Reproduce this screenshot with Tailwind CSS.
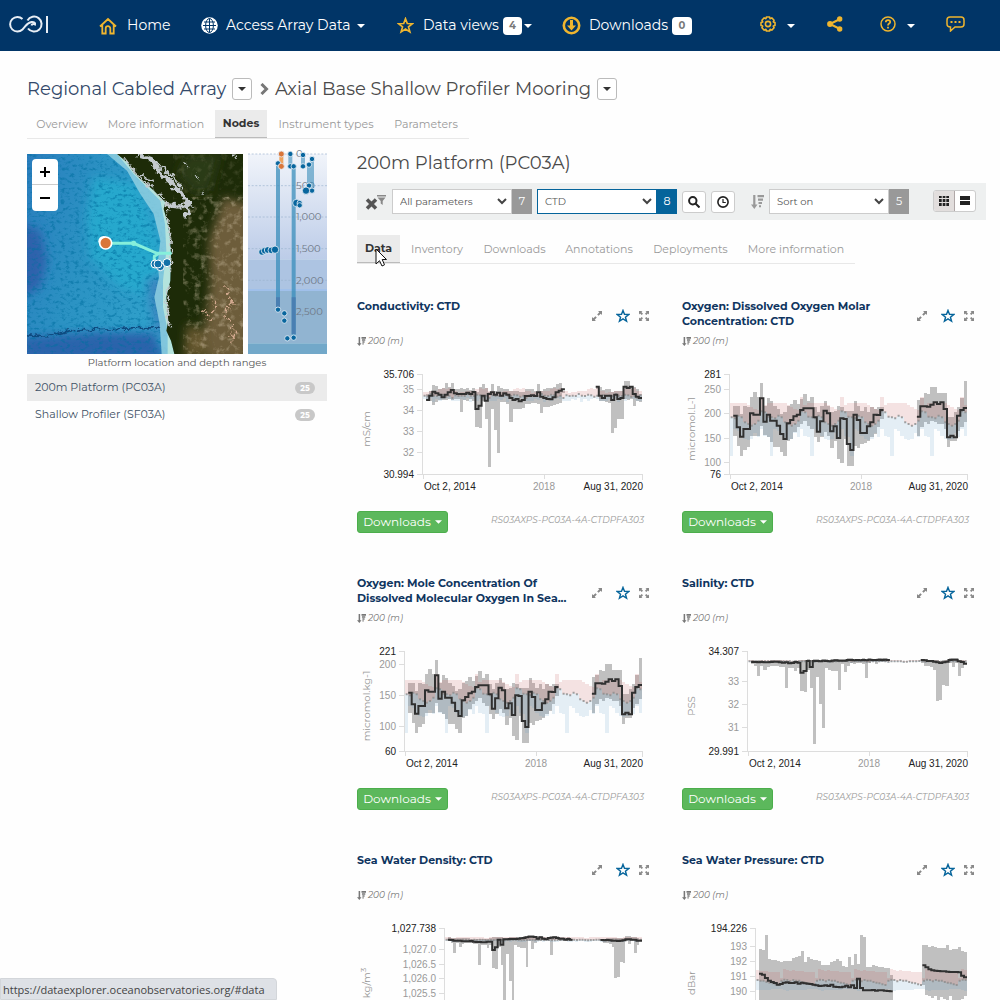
<!DOCTYPE html>
<html lang="en">
<head>
<meta charset="utf-8">
<meta name="viewport" content="width=device-width, initial-scale=1">
<title>OOI Data Explorer</title>
<script src="https://cdn.jsdelivr.net/npm/@tailwindcss/browser@4"></script>
</head>
<body class="h-screen overflow-hidden bg-[#fefefe] font-['Montserrat','Inter',sans-serif] text-[#333]">

<svg class="hidden" aria-hidden="true">
  <symbol id="caret" viewBox="0 0 8 4"><path d="M0 0h8L4 4z" fill="currentColor"/></symbol>
  <symbol id="chevron" viewBox="0 0 10 7"><path d="M1 1l4 4 4-4" fill="none" stroke="currentColor" stroke-width="2"/></symbol>
  <symbol id="star" viewBox="0 0 16 16"><path d="M8 1.600l1.700 4.500 4.900.2-3.800 3 1.300 4.700L8 11.300 3.900 14l1.300-4.700-3.800-3 4.900-.2z" fill="none" stroke="currentColor" stroke-width="1.600"/></symbol>
  <symbol id="resize" viewBox="0 0 12 12"><path d="M7 1h4v4L9.700 3.700 7.600 5.800 6.200 4.400l2.100-2.100zM5 11H1V7l1.300 1.300 2.100-2.100 1.400 1.400-2.100 2.100z" fill="currentColor"/></symbol>
  <symbol id="full" viewBox="0 0 12 12"><path d="M1 4.500V1h3.500L3.400 2.100 5 3.700 3.700 5 2.100 3.400zM7.500 1H11v3.500L9.900 3.400 8.300 5 7 3.700l1.600-1.600zM11 7.500V11H7.500l1.100-1.100L7 8.300 8.300 7l1.600 1.600zM4.500 11H1V7.500l1.100 1.100L3.700 7 5 8.300 3.400 9.900z" fill="currentColor"/></symbol>
  <symbol id="depth" viewBox="0 0 10 10"><path d="M1.800 0h1.700v7H5L2.600 10 0 7h1.800zM5 0h5v2H5zM5.500 2.500h3.700v1.700H5.500zM6 4.800h2.400v1.500H6zM6 7h1.500v1.300H6z" fill="currentColor"/></symbol>
</svg>

<header class="flex h-[51px] items-center bg-[#013567] text-[14px] text-white">
  <a href="#" aria-label="OOI" class="ml-2 w-[91px] pb-1">
    <svg class="h-5 w-[42px]" viewBox="0 0 42 20" fill="none" stroke="#e8eef5" stroke-width="2"><path d="M14.500 5A7.300 7.300 0 1 0 14.500 15.500C18 12 19 8.500 23.500 8c2.500-.3 4 1 3.500 2.500-1.500-1-3-.5-3.500 1M19.500 6.500A7.500 7.500 0 1 1 20 14.500"/><path d="M39 2v17"/></svg>
  </a>
  <nav class="flex items-center">
    <a href="#" class="flex w-[102px] items-center gap-[10px]">
      <svg class="size-[18px] text-[#efb52f]" viewBox="0 0 18 18" fill="none" stroke="currentColor" stroke-width="1.800"><path d="M1 9.500L9 2l8 7.500M3.300 8v8.500h3.400V11.500a2.300 2.300 0 0 1 4.600 0v5h3.400V8"/></svg>Home</a>
    <a href="#" class="flex w-[196px] items-center">
      <svg class="mr-2 size-[17px]" viewBox="0 0 17 17"><circle cx="8.500" cy="8.500" r="8.300" fill="#fff"/><g fill="none" stroke="#013567"><path d="M8.500 1.500v14M2 8.500h13M3 5h11M3 12h11"/><ellipse cx="8.500" cy="8.500" rx="3.900" ry="7"/></g></svg>Access Array Data
      <svg class="ml-[6px] h-1 w-2"><use href="#caret"/></svg></a>
    <a href="#" class="flex w-[165px] items-center">
      <svg class="mr-[9px] size-[17px] text-[#efb52f]"><use href="#star"/></svg>Data views
      <span class="mr-[2px] ml-1 flex h-[18px] w-[19px] items-center justify-center rounded-sm bg-white text-[10px] font-bold text-[#777]">4</span>
      <svg class="h-1 w-2"><use href="#caret"/></svg></a>
    <a href="#" class="flex w-[198px] items-center">
      <svg class="mr-2 size-[19px] text-[#efb52f]" viewBox="0 0 19 19"><circle cx="9.500" cy="9.500" r="7.700" fill="none" stroke="currentColor" stroke-width="2.600"/><path d="M8 4h3v5.500h3L9.500 14.500 5 9.500h3z" fill="currentColor"/></svg>Downloads
      <span class="ml-1 flex h-[18px] w-5 items-center justify-center rounded-sm bg-white text-[10px] font-bold text-[#777]">0</span></a>
  </nav>
  <div class="flex items-center pb-1">
    <button class="flex w-[67px] items-center gap-[11px]" aria-label="Settings">
      <svg class="size-4 text-[#efb52f]" viewBox="0 0 16 16" fill="none" stroke="currentColor"><path stroke-width="1.600" stroke-linejoin="round" d="M6.400 1h3.200l.5 1.700 1.700-.8 2.300 2.300-.8 1.700 1.700.5v3.200l-1.700.5.8 1.700-2.300 2.300-1.700-.8-.5 1.700H6.400l-.5-1.700-1.700.8-2.300-2.300.8-1.700L1 9.600V6.400l1.700-.5-.8-1.700 2.300-2.300 1.700.8z"/><circle cx="8" cy="8" r="2.600" stroke-width="1.600"/></svg>
      <svg class="mt-1 h-1 w-2"><use href="#caret"/></svg></button>
    <button class="w-[53px]" aria-label="Share">
      <svg class="size-4 text-[#efb52f]" viewBox="0 0 16 16"><path d="M13 3L3 8l10 5" fill="none" stroke="currentColor" stroke-width="2"/><g fill="currentColor"><circle cx="12.700" cy="3" r="2.700"/><circle cx="3" cy="8" r="2.900"/><circle cx="12.700" cy="13" r="2.700"/></g></svg></button>
    <button class="flex w-[66px] items-center gap-[11px]" aria-label="Help">
      <svg class="size-4 text-[#efb52f]" viewBox="0 0 16 16" fill="none" stroke="currentColor" stroke-width="1.500"><circle cx="8" cy="8" r="7"/><path d="M5.800 6.300C5.800 3.300 10.300 3.400 10.200 6c0 1.600-2.200 1.600-2.200 3.400M8 10.700v1.700" stroke-width="1.800"/></svg>
      <svg class="mt-1 h-1 w-2"><use href="#caret"/></svg></button>
    <button aria-label="Feedback">
      <svg class="h-4 w-[19px] text-[#efb52f]" viewBox="0 0 19 16"><path d="M4 1h11c2 0 3 1.300 3 3v4c0 1.700-1 3-3 3H9l-4.500 4V11C2 11 1 9.700 1 8V4c0-1.700 1-3 3-3z" fill="none" stroke="currentColor" stroke-width="1.500"/><path d="M4.500 5h2v2h-2zM8.500 5h2v2h-2zM12.500 5h2v2h-2z" fill="currentColor"/></svg></button>
  </div>
</header>

<div class="pt-[26px] pr-[14px] pl-[27px]">
  <div class="flex h-6 items-center text-[18px]">
    <h1 class="w-[205px] whitespace-nowrap text-[#33496a]">Regional Cabled Array</h1>
    <button class="flex h-[22px] w-5 items-center justify-center rounded-[3px] border border-[#bbb] bg-white" aria-label="Choose array"><svg class="h-1 w-2"><use href="#caret"/></svg></button>
    <svg class="mr-[6px] ml-2 h-3 w-[9px] text-[#777]" viewBox="0 0 9 12"><path d="M1.500 1l5 5-5 5" fill="none" stroke="currentColor" stroke-width="3"/></svg>
    <h1 class="w-[322px] whitespace-nowrap text-[#4a4a4a]">Axial Base Shallow Profiler Mooring</h1>
    <button class="flex h-[22px] w-5 items-center justify-center rounded-[3px] border border-[#bbb] bg-white" aria-label="Choose site"><svg class="h-1 w-2"><use href="#caret"/></svg></button>
  </div>

  <nav class="mt-[9px] flex h-[29px] w-[442px] items-stretch border-b border-[#e8e8e8] text-[11px] leading-7 whitespace-nowrap text-[#999]">
    <a href="#" class="w-[70px] text-center">Overview</a>
    <a href="#" class="w-[118px] text-center">More information</a>
    <a href="#" class="w-[52px] border-b border-[#bbb] bg-[#ebebeb] text-center leading-[27px] font-bold text-[#333]">Nodes</a>
    <a href="#" class="w-[118px] text-center">Instrument types</a>
    <a href="#" class="w-[82px] text-center">Parameters</a>
  </nav>

  <div class="mt-[15px] flex items-start gap-[30px]">
    <aside class="w-[300px] shrink-0">
      <div class="flex justify-between">
        <div class="relative">
          <svg class="block h-[200px] w-[216px]" viewBox="0 0 648 600">
            <defs>
              <linearGradient id="sea" x1="0" y1="0" x2="1" y2=".25"><stop offset="0" stop-color="#2b7dbd"/><stop offset=".35" stop-color="#2b92c3"/><stop offset=".7" stop-color="#2f9fca"/></linearGradient>
              <filter id="relief" x="0" y="0" width="100%" height="100%"><feTurbulence type="fractalNoise" baseFrequency=".07 .1" numOctaves="5" seed="8"/><feColorMatrix values="0 0 0 0 0  0 0 0 0 .16  0 0 0 0 .35  4 0 0 0 -2.050"/></filter>
              <filter id="dry" x="0" y="0" width="100%" height="100%"><feTurbulence type="fractalNoise" baseFrequency=".05" numOctaves="5" seed="3"/><feColorMatrix values="0 0 0 0 .72  0 0 0 0 .62  0 0 0 0 .45  0 3 0 0 -1.500"/></filter>
              <filter id="soft"><feGaussianBlur stdDeviation="14"/></filter>
              <filter id="rough" x="-10%" y="-10%" width="120%" height="120%"><feTurbulence type="fractalNoise" baseFrequency=".06" numOctaves="3" seed="5"/><feDisplacementMap in="SourceGraphic" scale="26" xChannelSelector="R" yChannelSelector="G"/></filter>
              <clipPath id="land"><path d="M270 0l30 25 20 30 30 30 25 20 25 25 15 15-5 20 10 35 8 40 4 60-2 80-12 50 6 70-6 30 14 30 10 40H648V0z"/></clipPath>
              <clipPath id="frame"><path d="M0 0h648v600H0z"/></clipPath>
            </defs>
            <g clip-path="url(#frame)">
              <path d="M0 0h648v600H0z" fill="url(#sea)"/>
              <g filter="url(#soft)">
                <path d="M200 70l130 20 50 130 30 100-30 110-100-30-90-90-10-120z" fill="#25a8cd"/>
                <path d="M-30 200l70 30 20 90-20 80-70 40z" fill="#2f62ac"/>
                <path d="M-20 550l220-15h180l40 85H-20z" fill="#2c64ab"/>
                <path d="M355 380l50-20 30 200-50-30z" fill="#3b86c0"/>
              </g>
              <path d="M0 0h460v600H0z" filter="url(#relief)" opacity=".55"/>
              <path d="M0 545c80 10 90-20 190-18 90 0 120-12 210-4" fill="none" stroke="#0e4b80" stroke-width="5" filter="url(#rough)"/>
              <path d="M240 0l60 50 40 70 40 60 20 80-8 70 4 40-14 60 16 80 6 90h44l-10-40-14-30 6-30-6-70 12-50 2-80-4-60-8-40-10-40-15-45-105-115z" fill="#8fcfe0" opacity=".85"/>
              <path d="M270 0l50 60 80 80 14 70 4 80-10 90v80l14 70v70h20l-10-40-14-30 6-30-6-70 12-50 2-80-4-60-8-40-5-75-105-115z" fill="#b4e3dd"/>
              <path d="M270 0l30 25 20 30 30 30 25 20 25 25 15 15-5 20 10 35 8 40 4 60-2 80-12 50 6 70-6 30 14 30 10 40H648V0z" fill="#1d2b08"/>
              <g clip-path="url(#land)">
                <g filter="url(#soft)"><path d="M590 130l80 20v470H545l-15-90 20-140-5-130z" fill="#6d5d3a"/><path d="M480 510l50 20 10 80h-70z" fill="#65562f"/><path d="M450 60l50 60 50-10 30-110H480z" fill="#2b3a14"/></g>
                <path d="M520 130h128v470H470l30-250z" filter="url(#dry)" opacity=".4"/>
                <path d="M440 0h208v140H500z" filter="url(#dry)" opacity=".15"/>
              </g>
              <g fill="none" stroke="#c4cace" filter="url(#rough)">
                <path d="M330 0l40 12 25 40 40 36 30 34 22 30-30 6-50-6" stroke-width="13"/>
                <path d="M478 130l6 40-12 26" stroke-width="12"/>
                <path d="M290 10l35 45 40 40 45 42M370 12l50 40 50 54M345 62l34 20" stroke-width="5"/>
                <path d="M425 165l-3 40 10 60-2 90M424 390l-6 70 12 60" stroke-width="5"/>
                <path d="M620 0l10 18M470 20l10 20M505 60l14 20M520 110l10 10" stroke-width="3"/>
              </g>
              <path d="M555 430l12 30-8 14M600 400l14 50-25 30 30 30-10 40M530 470l20 30M625 530l-15 40" fill="none" stroke="#d4aa90" stroke-width="6" stroke-dasharray="5 6 12 9" filter="url(#rough)"/>
              <path d="M236 268h84l70 30h44M382 325v-18l14-9" fill="none" stroke="#86efdb" stroke-width="9"/>
              <circle cx="320" cy="268" r="8" fill="#86efdb"/>
              <g stroke="#fff" stroke-width="3" fill="#1271a8"><circle cx="400" cy="338" r="12"/><circle cx="384" cy="330" r="12"/><circle cx="420" cy="326" r="12"/><circle cx="393" cy="330" r="12"/></g>
              <circle cx="230" cy="262" r="16" fill="#fff"/>
              <circle cx="236" cy="267" r="18" fill="#d9763a" stroke="#fff" stroke-width="5"/>
            </g>
          </svg>
          <div class="absolute top-[5px] left-[5px] w-[26px] overflow-hidden rounded bg-white text-black">
            <button class="block h-[26px] w-full border-b border-[#ccc]" aria-label="Zoom in"><svg class="mx-auto size-[10px]" viewBox="0 0 10 10"><path d="M0 5h10M5 0v10" stroke="#000" stroke-width="2"/></svg></button>
            <button class="block h-[26px] w-full" aria-label="Zoom out"><svg class="mx-auto size-[10px]" viewBox="0 0 10 10"><path d="M0 5h10" stroke="#000" stroke-width="2"/></svg></button>
          </div>
        </div>
        <svg class="block h-[200px] w-[79px] overflow-visible" viewBox="0 0 237 600">
          <defs><linearGradient id="deep" x1="0" y1="0" x2="0" y2="1"><stop offset="0" stop-color="#f1f4fa"/><stop offset="1" stop-color="#bccce8"/></linearGradient></defs>
          <path d="M0 0h237v316H0z" fill="url(#deep)"/><path d="M0 316h237v95H0z" fill="#adc4e2"/><path d="M0 405h237v8H0z" fill="#a0c0ea"/><path d="M0 411h237v157H0z" fill="#91b4d1"/><path d="M0 568h237v32H0z" fill="#72a8c9"/>
          <g stroke="#9bb3cf" stroke-width="2" stroke-dasharray="6 5"><path d="M0 0h237M0 95h237M0 189h237M0 284h237M0 379h237M0 474h237"/></g>
          <g fill="#6f7987" font-size="30"><text x="144" y="9">0</text><text x="144" y="105">500</text><text x="144" y="199">1,000</text><text x="144" y="295">1,500</text><text x="144" y="389">2,000</text><text x="144" y="484">2,500</text></g>
          <g stroke-width="12" stroke="#3a8ebb" fill="none"><path d="M90 30v430M137 37v515" opacity=".75"/><path d="M127 0v37M165 0v37M183 35v60M192 15v90" opacity=".6"/><path d="M100 0v37" stroke="#eda35f"/><path d="M90 430v30M137 430v110" stroke="#4a7fb2"/></g>
          <g fill="#08669e" stroke="#e6eef6" stroke-width="2.500"><circle cx="90" cy="28" r="8"/><circle cx="127" cy="0" r="8"/><circle cx="127" cy="37" r="8"/><circle cx="137" cy="37" r="8"/><circle cx="165" cy="3" r="8"/><circle cx="165" cy="37" r="8"/><circle cx="183" cy="32" r="8"/><circle cx="192" cy="15" r="8"/><circle cx="183" cy="95" r="8"/><circle cx="192" cy="110" r="8"/><circle cx="174" cy="110" r="11"/><circle cx="145" cy="147" r="11"/><circle cx="155" cy="147" r="8"/><circle cx="155" cy="154" r="8"/><circle cx="42" cy="294" r="10"/><circle cx="50" cy="290" r="10"/><circle cx="59" cy="288" r="10"/><circle cx="70" cy="289" r="10"/><circle cx="81" cy="287" r="11"/><circle cx="90" cy="467" r="8"/><circle cx="109" cy="478" r="8"/><circle cx="109" cy="500" r="8"/><circle cx="118" cy="553" r="8"/><circle cx="137" cy="551" r="8"/><circle cx="100" cy="0" r="9" fill="#d9763a"/><circle cx="100" cy="37" r="9" fill="#d9763a"/></g>
        </svg>
      </div>
      <p class="h-5 text-center text-[10px] leading-[18px] text-[#555]">Platform location and depth ranges</p>
      <ul class="text-[11px] text-[#3f5266]">
        <li><a href="#" class="flex h-[27px] items-center justify-between bg-[#ebebeb] px-2">200m Platform (PC03A)<span class="mr-1 flex h-3 w-5 items-center justify-center rounded-full bg-[#c8c8c8] text-[8px] font-bold text-white">25</span></a></li>
        <li><a href="#" class="flex h-[27px] items-center justify-between px-2">Shallow Profiler (SF03A)<span class="mr-1 flex h-3 w-5 items-center justify-center rounded-full bg-[#c8c8c8] text-[8px] font-bold text-white">25</span></a></li>
      </ul>
    </aside>

    <main class="min-w-0 flex-1">
      <h2 class="h-[29px] text-[18px] leading-[18px] whitespace-nowrap text-[#4a4a4a]">200m Platform (PC03A)</h2>

      <div class="flex h-[37px] items-center bg-[#eef0f0] px-2 text-[10px]">
        <button class="w-[27px]" aria-label="Clear filters"><svg class="h-4 w-[21px]" viewBox="0 0 21 16"><path d="M2 5.500l9 9M11 5.500l-9 9" stroke="#555" stroke-width="3.500"/><path d="M12 1h9v1.500h-9zM12.500 3.500h8L17.700 7v4l-2-1.500V7z" fill="#888"/></svg></button>
        <label class="relative flex h-[25px] w-[140px]"><span class="sr-only">Parameters</span>
          <select class="h-full w-[120px] appearance-none border border-[#ccc] bg-white pl-[7px] leading-5 text-[#555]"><option>All parameters</option></select>
          <svg class="absolute top-[9px] left-[105px] h-[7px] w-[10px] text-[#444]"><use href="#chevron"/></svg>
          <span class="flex flex-1 items-center justify-center bg-[#999] text-[11px] text-white">7</span></label>
        <label class="relative ml-[5px] flex h-[25px] w-[140px]"><span class="sr-only">Instrument</span>
          <select class="h-full w-[120px] appearance-none border border-[#05649b] bg-white pl-[7px] leading-5 text-[#555]"><option>CTD</option></select>
          <svg class="absolute top-[9px] left-[105px] h-[7px] w-[10px] text-[#444]"><use href="#chevron"/></svg>
          <span class="flex flex-1 items-center justify-center bg-[#05649b] text-[11px] text-white">8</span></label>
        <button class="ml-[5px] flex h-[22px] w-6 items-center justify-center rounded-[3px] border border-[#ccc] bg-white" aria-label="Search"><svg class="size-3" viewBox="0 0 12 12" fill="none" stroke="#222" stroke-width="2"><circle cx="4.800" cy="4.800" r="3.700"/><path d="M7.500 7.500l4 4"/></svg></button>
        <button class="ml-[5px] flex h-[22px] w-6 items-center justify-center rounded-[3px] border border-[#ccc] bg-white" aria-label="Time"><svg class="size-3" viewBox="0 0 12 12" fill="none" stroke="#222"><circle cx="6" cy="6" r="5.100" stroke-width="1.600"/><path d="M6 3v3.500h2.800" stroke-width="1.200"/></svg></button>
        <svg class="mr-[5px] ml-4 h-[14px] w-[13px] text-[#999]" viewBox="0 0 13 14"><path d="M2.200 0h2.200v9.500H6.500l-3.200 4.500L0 9.500h2.200zM6.500 0H13v2.200H6.500zM7 3.500h5v2.200H7zM7.500 7h3.500v2H7.500zM8 10.200h2v2H8z" fill="currentColor"/></svg>
        <label class="relative flex h-[25px] w-[140px]"><span class="sr-only">Sort</span>
          <select class="h-full w-[120px] appearance-none border border-[#ccc] bg-white pl-[7px] leading-5 text-[#555]"><option>Sort on</option></select>
          <svg class="absolute top-[9px] left-[105px] h-[7px] w-[10px] text-[#444]"><use href="#chevron"/></svg>
          <span class="flex flex-1 items-center justify-center bg-[#999] text-[11px] text-white">5</span></label>
        <div class="mr-[2px] mb-[2px] ml-auto flex h-[22px] w-[43px] overflow-hidden rounded-[3px] border border-[#ccc] bg-white">
          <button class="flex w-[21px] items-center justify-center border-r border-[#b0a8a8] bg-[#e2dedd]" aria-label="Grid view"><svg class="h-[10px] w-[10px]" viewBox="0 0 10 10"><path d="M0 0h2.700v2H0zm3.700 0h2.700v2H3.700zm3.600 0H10v2H7.300zM0 3h2.700v3H0zm3.700 0h2.700v3H3.700zm3.600 0H10v3H7.300zM0 7h2.700v3H0zm3.700 0h2.700v3H3.700zm3.600 0H10v3H7.300z" fill="#222"/></svg></button>
          <button class="flex flex-1 items-center justify-center" aria-label="List view"><svg class="h-[9px] w-[10px]" viewBox="0 0 10 9"><path d="M0 0h10v4H0zM0 5h10v4H0z" fill="#222"/></svg></button>
        </div>
      </div>

      <nav class="mt-[15px] flex h-[29px] w-[498px] border-b border-[#e8e8e8] text-[11px] leading-7 whitespace-nowrap text-[#999]">
        <a href="#data" class="relative w-[43px] border-b border-[#bbb] bg-[#ebebeb] text-center leading-[27px] font-bold text-[#333]">Data
          <svg class="absolute top-[13px] left-[18px] h-[19px] w-3" viewBox="0 0 12 19"><path d="M1 1v15l3.500-3.300L7 18l2.500-1.200L7.200 11.500H11.500z" fill="#fff" stroke="#111"/></svg></a>
        <a href="#" class="w-[74px] text-center">Inventory</a>
        <a href="#" class="w-[81px] text-center">Downloads</a>
        <a href="#" class="w-[88px] text-center">Annotations</a>
        <a href="#" class="w-[95px] text-center">Deployments</a>
        <a href="#" class="w-[116px] text-center">More information</a>
      </nav>

      <div id="cards" class="mt-[34px] grid grid-cols-2 gap-x-8 pr-[11px]"></div>
    </main>
  </div>
</div>

<div class="fixed bottom-0 left-0 h-[22px] w-[277px] rounded-tr border border-[#d3d6da] bg-[#dee1e6] pl-[2px] font-['Open_Sans','Noto_Sans',sans-serif] text-[11px] leading-[22px] whitespace-nowrap text-[#444]">https://dataexplorer.oceanobservatories.org/#data</div>

<script>
// One value per month, Oct 2014 - Aug 2020; 0 is the top of the axis and 300 the bottom. "_" marks a missing month.
const parse = s => s.trim().split(/\s+/).map(v => v === '_' ? null : +v);
const GAP = ' _ _ _ _ _ _ _ _ _ _ ';
const oxygen = {
  line: parse('_ 125 160 188 165 165 118 122 122 73 143 122 140 140 155 180 195 148 138 127 122 108 103 103 103 130 173 142 110 118 172 157 192 133 135 210 228 122 138 177 177 157 145 122 123 108' + GAP + '128 97 97 98 92 85 90 85 105 190 185 190 125 108 102'),
  hi: parse('_ 95 95 120 95 100 68 55 68 28 95 72 80 95 105 120 115 95 90 78 90 75 60 80 68 100 115 95 82 95 115 110 95 100 110 110 110 82 95 110 100 115 100 105 98 98' + GAP + '78 72 58 60 38 40 58 58 58 130 130 115 100 72 20'),
  lo: parse('_ 185 215 247 228 220 185 187 187 155 182 190 205 220 220 235 247 200 195 175 160 150 140 155 165 190 205 190 175 185 222 200 255 267 195 277 277 215 222 210 207 200 190 180 160 135' + GAP + '185 160 145 150 140 145 150 150 165 218 200 200 172 160 145'),
  pink: [88, 86, 86, 88, 88, 92, 98, 105, 108, 70, 92, 86], blue: [247, 165, 170, 185, 195, 198, 195, 178, 190, 165, 185, 190],
  mean: [130, 133, 125, 130, 145, 150, 155, 150, 140, 112, 115, 128]
};
const salt = {
  line: parse('_ 33 33 34 33 34 34 33 32 32 34 35 34 37 36 33 35 65 60 30 48 30 30 31 29 30 31 29 28 29 29 29 27 27 28 27 28 27 28 26 27 27 26 27 26 27' + GAP + '27 28 30 30 32 34 36 34 32 27 26 26 31 33 38'),
  hi: parse('_ 28 28 28 28 29 29 28 28 28 28 29 29 30 30 28 30 28 26 25 28 25 25 26 25 25 26 25 24 25 25 25 22 22 24 23 24 22 24 22 23 23 22 22 22 23' + GAP + '24 24 26 26 28 28 30 28 28 22 22 22 27 28 34'),
  lo: parse('_ 38 45 75 45 58 48 45 46 44 47 48 112 50 50 60 50 120 122 58 110 278 78 160 232 52 58 60 60 117 38 64 45 36 38 35 36 38 80 37 34 40 34 33 32 30' + GAP + '35 44 46 48 56 150 148 103 106 35 48 35 75 50 40'),
  pink: [28, 28, 29, 29, 28, 28, 27, 26, 26, 27, 28, 28], blue: [34, 34, 35, 34, 34, 33, 34, 34, 34, 35, 34, 34],
  mean: [31, 31, 32, 32, 31, 31, 31, 30, 31, 32, 31, 31]
};
const density = { ...salt,
  line: parse('_ 35 36 38 38 38 40 40 40 39 41 42 42 43 43 41 41 66 58 35 50 34 34 33 33 33 32 31 30 28 26 26 27 32 28 32 34 30 29 28 30 32 32 35 33 35' + GAP + '36 37 36 37 38 38 39 38 37 34 34 35 35 38 38'),
  hi: parse('_ 28 30 30 30 30 31 31 31 32 33 34 33 34 34 33 31 26 27 28 28 30 30 28 28 28 28 27 25 23 21 22 23 26 25 28 30 26 24 24 25 27 28 30 28 31' + GAP + '32 33 30 31 31 30 30 30 31 24 25 27 27 30 34'),
  mean: [35, 35, 36, 37, 36, 36, 35, 35, 36, 36, 35, 36], blue: [40, 40, 41, 42, 41, 40, 40, 40, 41, 41, 40, 41] };
const conduct = {
  line: parse('_ 78 65 53 58 62 70 62 55 48 58 60 60 60 56 60 54 105 95 65 80 60 55 62 56 65 58 62 72 78 75 82 78 66 66 64 66 55 68 72 75 76 70 55 50 46' + GAP + '38 65 72 65 65 78 62 75 72 38 42 38 60 68 72'),
  hi: parse('_ 60 50 33 36 45 42 28 38 27 45 45 42 45 42 47 42 55 40 30 42 55 30 52 35 42 45 45 50 52 50 55 55 45 45 45 50 30 50 45 42 42 38 30 26 50' + GAP + '40 40 48 45 45 55 50 50 50 22 22 35 40 45 60'),
  lo: parse('_ 78 82 92 85 78 78 78 74 78 75 75 115 78 80 75 80 160 162 80 135 278 105 168 238 85 85 90 143 105 105 105 103 90 90 88 88 90 118 100 100 95 93 90 88 58' + GAP + '45 80 80 85 88 177 162 135 135 75 78 75 95 82 85'),
  pink: [55, 55, 50, 52, 50, 45, 43, 44, 42, 50, 50, 57], blue: [74, 78, 72, 84, 76, 80, 75, 72, 74, 80, 82, 80],
  mean: [65, 66, 60, 65, 66, 62, 64, 68, 65, 72, 64, 66]
};
const pressure = {
  line: parse('_ 137 140 150 158 162 165 170 168 164 163 165 165 163 167 164 166 167 168 170 172 174 173 172 174 170 176 177 178 176 173 178 172 180 152 180 187 187 187 186 188 187 187 188 189 190' + GAP + '112 118 124 127 128 129 130 130 131 132 132 132 133 143 148'),
  hi: parse('_ 63 65 20 93 95 97 100 103 100 100 98 90 86 84 68 103 87 94 97 95 100 110 110 110 102 98 92 100 115 116 88 110 78 108 20 28 118 116 112 115 118 118 120 120 140' + GAP + '50 52 57 55 58 60 60 60 50 65 62 62 58 68 73'),
  lo: parse('_' + ' 330'.repeat(45) + GAP + '170 200 205 210 205 215 208 212 220 205 215 225 220 212 205'),
  pink: [126, 128, 129, 130, 131, 131, 132, 133, 150, 124, 126, 128], blue: [186, 186, 186, 185, 185, 184, 184, 182, 182, 187, 188, 187],
  mean: [156, 158, 158, 162, 164, 166, 169, 171, 158, 155, 156, 160]
};
const cards = [
  { title: 'Conductivity: CTD', data: conduct, x: 66, mid: 187, unit: 'mS/cm', cy: 67, ticks: [['35.706', 0], ['35', 15], ['34', 36], ['33', 57], ['32', 78], ['30.994', 100]] },
  { title: 'Oxygen: Dissolved Oxygen Molar Concentration: CTD', data: oxygen, x: 48, mid: 179, unit: 'micromol.L-1', cy: 67, ticks: [['281', 0], ['250', 15], ['200', 39], ['150', 64], ['100', 88], ['76', 100]] },
  { title: 'Oxygen: Mole Concentration Of Dissolved Molecular Oxygen In Sea...', data: oxygen, x: 48, mid: 179, unit: 'micromol.kg-1', cy: 67, ticks: [['221', 0], ['200', 13], ['150', 44], ['100', 75], ['60', 100]] },
  { title: 'Salinity: CTD', data: salt, x: 66, mid: 187, unit: 'PSS', cy: 67, ticks: [['34.307', 0], ['33', 30], ['32', 53], ['31', 76], ['29.991', 100]] },
  { title: 'Sea Water Density: CTD', data: density, x: 88, mid: 200, unit: 'kg/m<tspan dy="-4" font-size="8">3</tspan>', cy: 67, ticks: [['1,027.738', 0], ['1,027.0', 21], ['1,026.5', 36], ['1,026.0', 50], ['1,025.5', 65], ['1,024.5', 100]] },
  { title: 'Sea Water Pressure: CTD', data: pressure, x: 74, mid: 191, unit: 'dBar', cy: 67, ticks: [['194.226', 0], ['193', 18], ['192', 33], ['191', 48], ['190', 63], ['189', 78], ['187.5', 100]] }
];
const TOP = 12, RIGHT = 285;
function plot({ data, x }) {
  const w = (RIGHT - x) / 71, px = i => (x + i * w).toFixed(1), py = v => (TOP + v / 3).toFixed(1);
  const band = (a, b) => a.map((v, i) => v == null || b[i] == null ? '' : `M${px(i)} ${py(v)}H${px(i + 1)}V${py(b[i])}H${px(i)}z`).join('');
  const months = [...Array(71).keys()], cyc = a => months.map(i => a[i % 12]);
  let line = '', pen = false;
  data.line.forEach((v, i) => {
    if (v == null) { pen = false; return; }
    line += (pen ? 'V' : 'M' + px(i) + ' ') + py(v) + 'H' + px(i + 1); pen = true;
  });
  const mean = cyc(data.mean).map((v, i) => `M${px(i + .2)} ${py(v)}h2`).join('');
  return `<path d="${band(data.hi, data.lo)}" fill="#c0c0c0"/>
    <path d="${band(cyc(data.pink), cyc(data.mean))}" fill="#c86464" fill-opacity=".18"/>
    <path d="${band(cyc(data.mean), cyc(data.blue))}" fill="#64a0c8" fill-opacity=".17"/>
    <path d="${mean}" stroke="#8c8c8c" stroke-width="2" stroke-opacity=".8" shape-rendering="auto"/>
    <path d="${line}" fill="none" stroke="#303030" stroke-width="2" shape-rendering="auto"/>`;
}
function chart(c) {
  const last = c.ticks.length - 1;
  const ticks = c.ticks.map(([t, y], i) => `<path d="M${c.x - 6} ${TOP + y + .5}h6" stroke="#ddd"/><text x="${c.x - 9}" y="${TOP + y + 4}" text-anchor="end" fill="${i && i < last ? '#999' : '#222'}">${t}</text>`).join('');
  return `<svg class="mt-[14px] block h-auto w-full overflow-visible font-['Liberation_Sans',Arial,sans-serif]" viewBox="0 0 293 133" font-size="10" shape-rendering="crispEdges">
    <path d="M${c.x - .5} ${TOP}v100.500M${c.x} ${TOP + 100.5}H${RIGHT + .5}v5M${c.x + .5} ${TOP + 100}v5M${c.mid + .5} ${TOP + 100}v5" fill="none" stroke="#ddd"/>
    ${ticks}${plot(c)}
    <g fill="#222"><text x="${c.x + 1}" y="128">Oct 2, 2014</text><text x="${RIGHT + 1}" y="128" text-anchor="end">Aug 31, 2020</text></g>
    <text x="${c.mid}" y="128" text-anchor="middle" fill="#999">2018</text>
    <text class="font-['Montserrat','Inter',sans-serif]" transform="translate(13 ${c.cy}) rotate(-90)" text-anchor="middle" fill="#999" font-size="10">${c.unit}</text>
  </svg>`;
}
document.getElementById('cards').innerHTML = cards.map(c => `
  <article class="pb-[42px]">
    <div class="flex h-9 justify-between">
      <h3 class="w-[218px] pt-px text-[11px] leading-[15px] font-bold text-[#0f355f]">${c.title}</h3>
      <div class="flex h-9 items-center text-[#888]">
        <button class="mr-[13px]" aria-label="Enlarge"><svg class="size-3"><use href="#resize"/></svg></button>
        <button class="mr-[8px] text-[#05649b]" aria-label="Favourite"><svg class="size-[14px]"><use href="#star"/></svg></button>
        <button aria-label="Full screen"><svg class="size-3"><use href="#full"/></svg></button>
      </div>
    </div>
    <p class="flex h-[14px] items-center gap-[2px] text-[9px] text-[#777] italic"><svg class="size-[9px]"><use href="#depth"/></svg>200 (m)</p>
    ${chart(c)}
    <div class="mt-4 flex items-start justify-between pr-[6px]">
      <button class="flex h-[22px] w-[91px] items-center justify-center gap-1 rounded-[3px] border border-[#4cae4c] bg-[#5cb85c] text-[12px] text-white">Downloads<svg class="h-1 w-[7px]"><use href="#caret"/></svg></button>
      <span class="text-[9px] leading-[17px] text-[#999] italic">RS03AXPS-PC03A-4A-CTDPFA303</span>
    </div>
  </article>`).join('');
</script>
</body>
</html>
